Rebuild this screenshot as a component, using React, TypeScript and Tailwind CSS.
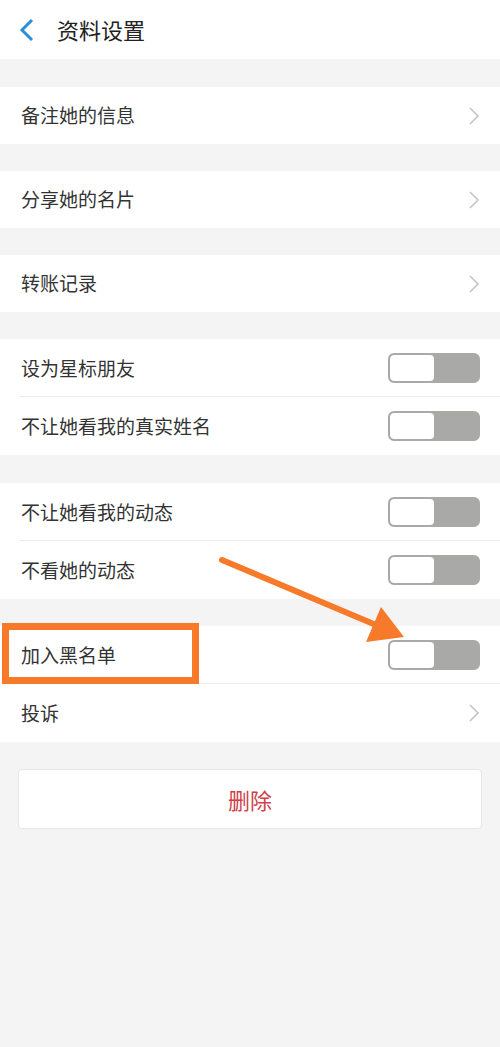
import React from "react";

const font = { fontFamily: '"Noto Sans CJK SC", "Noto Sans", sans-serif' };

function Chevron() {
  return (
    <svg width="12" height="20" viewBox="0 0 12 20" className="mr-[20px]">
      <path d="M2 2 L10 10 L2 18" fill="none" stroke="#c4c4c4" strokeWidth="1.6" />
    </svg>
  );
}

function Toggle() {
  return (
    <div className="mr-[20px] flex h-[30px] w-[92px] overflow-hidden rounded-[6px] border-2 border-[#a9aaa8] bg-[#a9aaa8]">
      <div className="h-full w-[44px] rounded-[4px] bg-white" />
    </div>
  );
}

function Row({ label, right, divider, h = "h-[58px]" }: { label: string; right: "chev" | "toggle"; divider?: boolean; h?: string }) {
  return (
    <div className={`relative flex ${h} items-center justify-between bg-white`}>
      <span className="pl-[21px] text-[19px] text-[#333333]">{label}</span>
      {right === "chev" ? <Chevron /> : <Toggle />}
      {divider && <div className="absolute bottom-0 left-[20px] right-0 h-px bg-[#ebebeb]" />}
    </div>
  );
}

export default function App() {
  return (
    <div className="relative min-h-[1047px] w-[500px] bg-[#f4f4f4]" style={font}>
      <div className="flex h-[59px] items-center bg-white">
        <svg width="16" height="24" viewBox="0 0 16 24" className="ml-[19px]">
          <path d="M13 2 L3 12 L13 22" fill="none" stroke="#2a8fd8" strokeWidth="3" strokeLinejoin="miter" />
        </svg>
        <span className="ml-[22px] text-[22px] text-[#222222]">资料设置</span>
      </div>
      <div className="h-[28px]" />
      <Row label="备注她的信息" right="chev" h="h-[57px]" />
      <div className="h-[27px]" />
      <Row label="分享她的名片" right="chev" h="h-[57px]" />
      <div className="h-[27px]" />
      <Row label="转账记录" right="chev" h="h-[57px]" />
      <div className="h-[27px]" />
      <Row label="设为星标朋友" right="toggle" divider />
      <Row label="不让她看我的真实姓名" right="toggle" />
      <div className="h-[28px]" />
      <Row label="不让她看我的动态" right="toggle" divider />
      <Row label="不看她的动态" right="toggle" />
      <div className="h-[27px]" />
      <Row label="加入黑名单" right="toggle" divider />
      <Row label="投诉" right="chev" />
      <div className="h-[27px]" />
      <div className="mx-[18px] flex h-[60px] items-center justify-center rounded-[4px] border border-[#e6e6e6] bg-white">
        <span className="text-[22px] text-[#cf3f4a]">删除</span>
      </div>

      <div className="absolute left-[2px] top-[623px] h-[61px] w-[197px] border-[7px] border-[#f67a2a]" />
      <svg className="absolute left-0 top-0" width="500" height="700" viewBox="0 0 500 700">
        <line x1="222" y1="560" x2="376" y2="625" stroke="#f67a2a" strokeWidth="6" strokeLinecap="round" />
        <polygon points="381,607 404,637 366,642" fill="#f67a2a" />
      </svg>
    </div>
  );
}
